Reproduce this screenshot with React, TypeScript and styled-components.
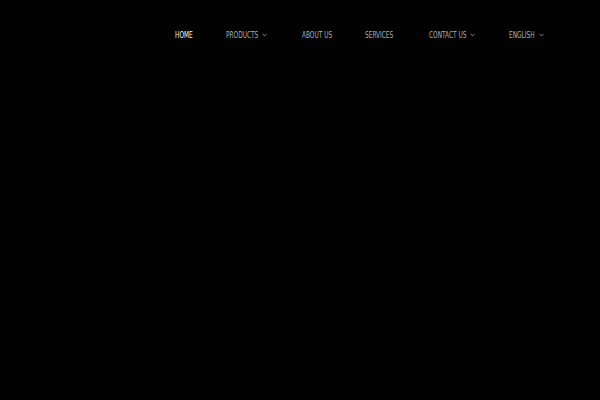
import React from 'react';
import styled, { createGlobalStyle } from 'styled-components';

const GlobalStyle = createGlobalStyle`
  html, body {
    margin: 0;
    padding: 0;
    background: #020202;
  }
`;

const Page = styled.div`
  width: 600px;
  height: 400px;
  background: #020202;
  overflow: hidden;
`;

const NavBar = styled.nav`
  display: flex;
  justify-content: flex-end;
  align-items: center;
  height: 70px;
  padding-right: 56px;
`;

const NavList = styled.ul`
  display: flex;
  align-items: center;
  gap: 34.5px;
  margin: 0;
  padding: 0;
  list-style: none;
`;

const NavItem = styled.li<{ $active?: boolean }>`
  display: flex;
  align-items: center;
  gap: 4px;
  font-family: "DejaVu Sans Condensed", "DejaVu Sans", sans-serif;
  font-size: 9px;
  color: ${p => (p.$active ? '#f4f4f4' : '#b0b0b0')};
  cursor: pointer;
`;

// the reference face is much narrower than anything installed, so squeeze it
const Label = styled.span<{ $w: number }>`
  display: inline-block;
  width: ${p => p.$w}px;
  white-space: nowrap;
`;

const Squeezed = styled.span`
  display: inline-block;
  transform: scaleX(0.72);
  transform-origin: left center;
`;

const Chevron = () => (
  <svg width="5" height="4" viewBox="0 0 5 4">
    <path d="M0.6 1 L2.5 2.9 L4.4 1" fill="none" stroke="#b0b0b0" strokeWidth="0.8" />
  </svg>
);

const items = [
  { label: 'HOME', w: 17, active: true },
  { label: 'PRODUCTS', w: 32, dropdown: true },
  { label: 'ABOUT US', w: 29 },
  { label: 'SERVICES', w: 29 },
  { label: 'CONTACT US', w: 37, dropdown: true },
  { label: 'ENGLISH', w: 26, dropdown: true },
];

const App = () => (
  <Page>
    <GlobalStyle />
    <NavBar>
      <NavList>
        {items.map(item => (
          <NavItem key={item.label} $active={item.active}>
            <Label $w={item.w}>
              <Squeezed>{item.label}</Squeezed>
            </Label>
            {item.dropdown && <Chevron />}
          </NavItem>
        ))}
      </NavList>
    </NavBar>
  </Page>
);

export default App;
